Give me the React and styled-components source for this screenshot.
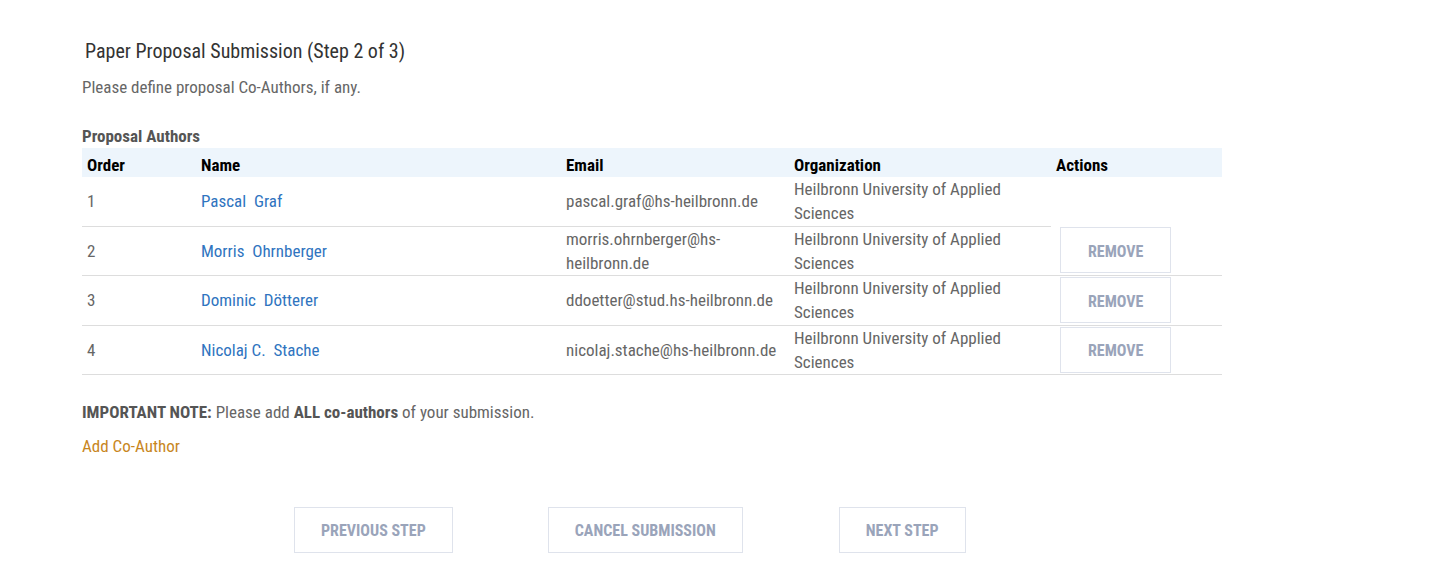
import React from "react";
import styled, { createGlobalStyle } from "styled-components";

const Global = createGlobalStyle`
  body {
    margin: 8px;
    background: #ffffff;
    font-family: "Roboto", "Liberation Sans", sans-serif;
    font-stretch: 75%;
    font-size: 17px;
    line-height: 24px;
    color: #666666;
  }
  * { box-sizing: border-box; }
`;

const Page = styled.div`
  padding: 31px 0 0 74px;
  font-stretch: 75%;
`;

const Title = styled.h2`
  margin: 0 0 12px 3px;
  font-size: 20px;
  line-height: 24px;
  font-weight: 400;
  color: #333333;
`;

const Lead = styled.p`
  margin: 0 0 25px 0;
`;

const SectionLabel = styled.div`
  font-weight: 700;
  color: #555555;
`;

const Table = styled.table`
  width: 1140px;
  border-collapse: collapse;
  table-layout: fixed;
`;

const HeadCell = styled.th`
  text-align: left;
  background: #edf5fc;
  color: #000000;
  font-weight: 700;
  height: 29px;
  padding: 0 5px;
  vertical-align: bottom;
  width: ${(p) => p.w}px;
`;

const Cell = styled.td`
  padding: 0 5px;
  height: ${(p) => p.$h || 49}px;
  vertical-align: middle;
  border-bottom: ${(p) => (p.$noBorder ? "none" : "1px solid #dddddd")};
`;

const NameLink = styled.a`
  color: #2f74c0;
  text-decoration: none;
`;

const OutlineButton = styled.button`
  font-family: inherit;
  font-stretch: 75%;
  font-size: 16px;
  font-weight: 700;
  text-transform: uppercase;
  color: #9aa4ba;
  background: #ffffff;
  border: 1px solid #dfe3ec;
  height: 46px;
  padding: 2px ${(p) => p.$px || 26}px 0;
  margin-left: ${(p) => p.$ml || 0}px;
  cursor: pointer;
`;

const Note = styled.p`
  margin: 25px 0 10px 0;
  b { color: #555555; }
`;

const AddLink = styled.a`
  color: #c8861e;
  text-decoration: none;
  display: block;
`;

const ButtonBar = styled.div`
  display: flex;
  gap: 95px;
  margin: 49px 0 0 212px;
  & > :last-child { margin-left: 1px; }
`;

const authors = [
  { name: "Pascal\u00a0 Graf", email: "pascal.graf@hs-heilbronn.de" },
  { name: "Morris\u00a0 Ohrnberger", email: "morris.ohrnberger@hs-heilbronn.de" },
  { name: "Dominic\u00a0 Dötterer", email: "ddoetter@stud.hs-heilbronn.de" },
  { name: "Nicolaj C.\u00a0 Stache", email: "nicolaj.stache@hs-heilbronn.de" },
];

export default function App() {
  return (
    <>
      <Global />
      <Page>
        <Title>Paper Proposal Submission (Step 2 of 3)</Title>
        <Lead>Please define proposal Co-Authors, if any.</Lead>
        <SectionLabel>Proposal Authors</SectionLabel>
        <Table>
          <thead>
            <tr>
              <HeadCell w={114}>Order</HeadCell>
              <HeadCell w={365}>Name</HeadCell>
              <HeadCell w={228}>Email</HeadCell>
              <HeadCell w={262}>Organization</HeadCell>
              <HeadCell w={171}>Actions</HeadCell>
            </tr>
          </thead>
          <tbody>
            {authors.map((a, i) => (
              <tr key={i}>
                <Cell $h={i === 2 ? 50 : 49}>{i + 1}</Cell>
                <Cell>
                  <NameLink href="#">{a.name}</NameLink>
                </Cell>
                <Cell>{a.email}</Cell>
                <Cell>Heilbronn University of Applied Sciences</Cell>
                <Cell $noBorder={i === 0}>
                  {i > 0 && (
                    <OutlineButton $ml={4} $px={27}>
                      Remove
                    </OutlineButton>
                  )}
                </Cell>
              </tr>
            ))}
          </tbody>
        </Table>
        <Note>
          <b>IMPORTANT NOTE:</b> Please add <b>ALL co-authors</b> of your submission.
        </Note>
        <AddLink href="#">Add Co-Author</AddLink>
        <ButtonBar>
          <OutlineButton>Previous Step</OutlineButton>
          <OutlineButton>Cancel Submission</OutlineButton>
          <OutlineButton>Next Step</OutlineButton>
        </ButtonBar>
      </Page>
    </>
  );
}
